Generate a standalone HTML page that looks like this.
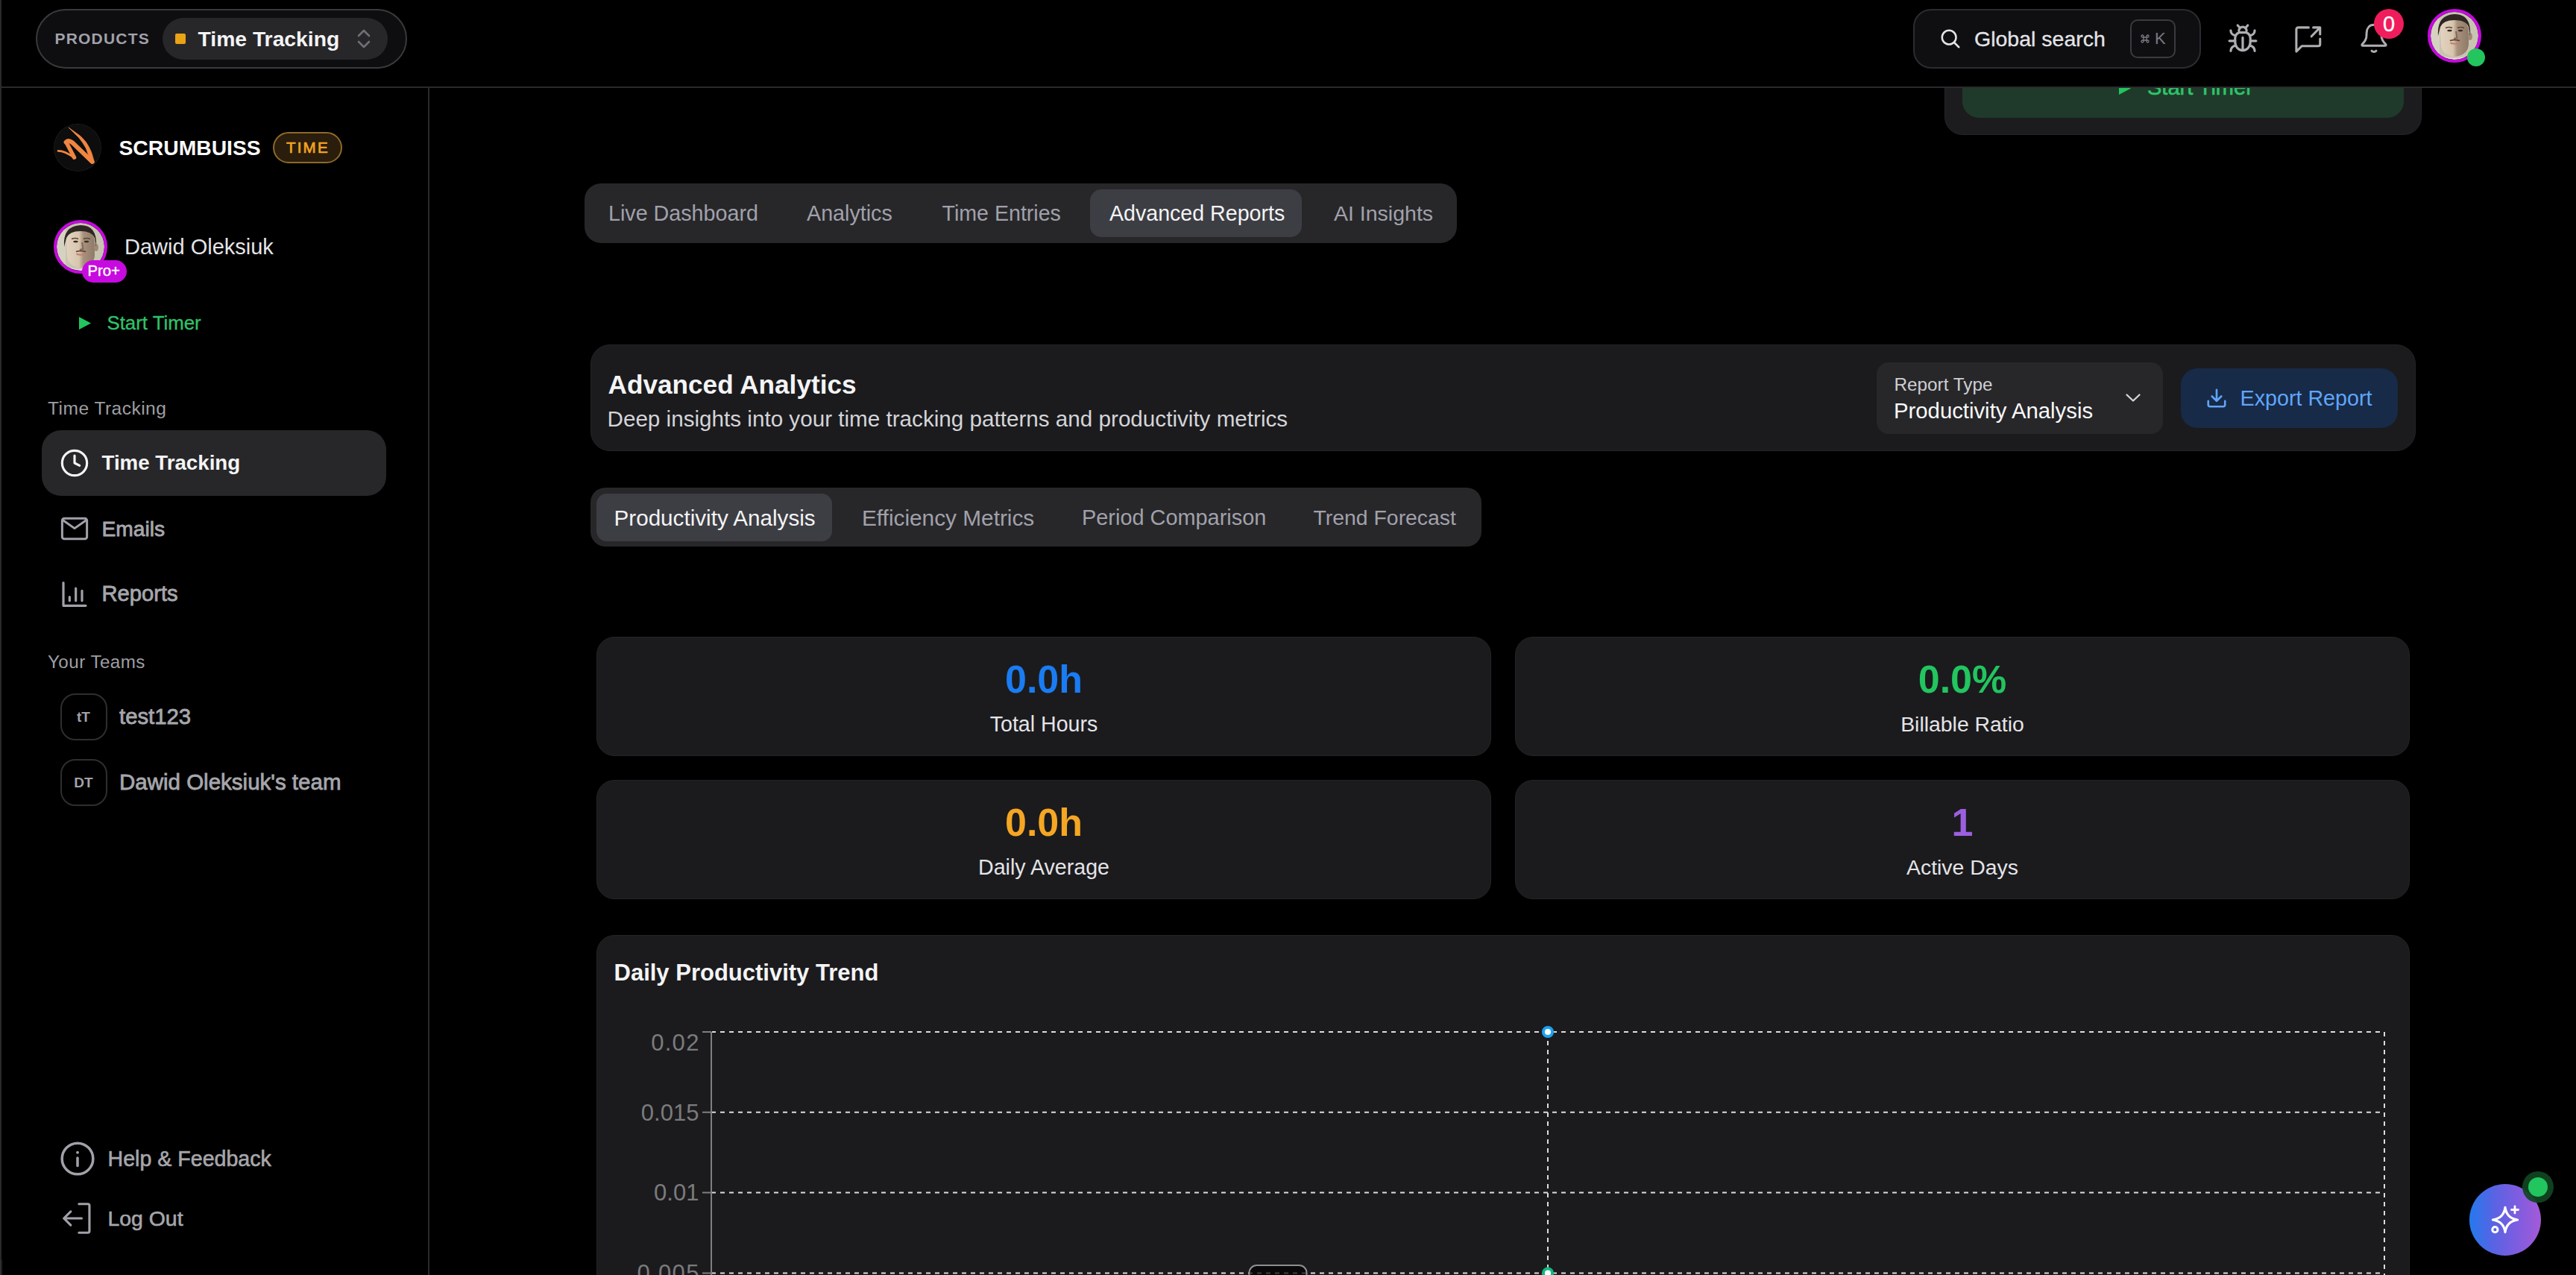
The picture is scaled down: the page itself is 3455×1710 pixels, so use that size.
<!DOCTYPE html>
<html><head><meta charset="utf-8">
<style>
html,body{margin:0;padding:0;background:#000;}
#root{position:relative;width:3455px;height:1710px;overflow:hidden;background:#000;font-family:"Liberation Sans",sans-serif;}
.a{position:absolute;}
.t{position:absolute;line-height:1;white-space:nowrap;}
.b{font-weight:700;}
svg{position:absolute;overflow:visible;}
</style></head><body><div id="root">

<svg style="left:0;top:0;position:absolute" width="0" height="0"><defs><clipPath id="avc"><circle cx="32" cy="32" r="32"/></clipPath>
<filter id="fblur" x="-10%" y="-10%" width="120%" height="120%"><feGaussianBlur stdDeviation="0.6"/></filter>
<linearGradient id="fshade" x1="0" x2="1" y1="0" y2="0"><stop offset="0" stop-color="#e2d3bf"/><stop offset="0.45" stop-color="#d8c5ae"/><stop offset="0.6" stop-color="#a8917c"/><stop offset="1" stop-color="#8f7a68"/></linearGradient>
<g id="face"><g filter="url(#fblur)"><rect x="-2" y="-2" width="68" height="68" fill="#c9c4b1"/><rect x="-2" y="-2" width="14" height="68" fill="#d6d2c2"/>
<path d="M13 26 Q13 10 32 10 Q51 10 51 26 L51 44 Q50 58 32 60 Q15 58 14 44Z" fill="url(#fshade)"/>
<ellipse cx="53" cy="33" rx="3" ry="5" fill="#a08a76"/>
<path d="M10 32 Q8 4 32 3 Q55 3 53 32 L51 20 Q47 11 32 11 Q17 11 13 20Z" fill="#2f2620"/>
<path d="M20 21.5 Q25 19.5 29 21.5M36 21.5 Q40 19.5 45 21.5" stroke="#5a4638" stroke-width="1.6" fill="none"/>
<ellipse cx="25.5" cy="25" rx="3.2" ry="1.3" fill="#3a2c24"/><ellipse cx="40" cy="25" rx="3.2" ry="1.3" fill="#3a2c24"/>
<path d="M34 26 L35.5 35 L31 36" stroke="#7e6656" stroke-width="1.8" fill="none"/>
<path d="M26 38.5 Q32 36.5 39 38.5" stroke="#4f3c31" stroke-width="1.6" fill="none"/>
<path d="M26.5 41.5 Q32 44 38.5 41.5" stroke="#c28274" stroke-width="2.2" fill="none"/>
<path d="M18 60 Q32 64 46 60 L48 66 L16 66Z" fill="#e4dfd4"/></g></g></defs></svg>
<!-- header -->
<div class="a" style="left:0;top:0;width:3455px;height:116px;background:#000;"></div>
<div class="a" style="left:0;top:116px;width:3455px;height:2px;background:#2a2a2b;"></div>
<div class="a" style="left:574px;top:118px;width:2px;height:1592px;background:#2a2a2b;"></div>
<div class="a" style="left:0;top:0;width:1.5px;height:1710px;background:#2a2a2b;"></div><div class="a" style="left:0;top:1690px;width:4px;height:20px;background:linear-gradient(90deg,#3a3d3c,#000);"></div>

<!-- top-right timer card (under header) -->
<div class="a" style="left:2600px;top:118px;width:660px;height:80px;overflow:hidden;">
<div class="a" style="left:8px;top:-178px;width:640px;height:241.4px;background:#1c1c1f;border-radius:24px;box-sizing:border-box;border:1px solid #252528;"></div>
<div class="a" style="left:32px;top:-158px;width:592px;height:197.7px;background:#1f3a2b;border-radius:22px;"></div>
<svg style="left:242px;top:-8px" width="16" height="17" viewBox="0 0 16 17"><path d="M0 0 L16 8.5 L0 17Z" fill="#22c55e"/></svg>
<div class="t" style="left:280px;top:-14.9px;font-size:29px;color:#2fc46a;-webkit-text-stroke:0.6px #2fc46a;">Start Timer</div>
</div>
<div class="a" style="left:48px;top:12px;width:494px;height:76px;border:2px solid #3a3a3d;border-radius:40px;background:#0e0e11;"></div>
<div class="t b" style="left:73.5px;top:41.3px;font-size:21px;letter-spacing:1.2px;color:#a1a1aa;">PRODUCTS</div>
<div class="a" style="left:218px;top:24px;width:302px;height:56px;border-radius:28px;background:#27272a;"></div>
<div class="a" style="left:235px;top:45px;width:14px;height:14px;border-radius:2px;background:#eaa216;"></div>
<div class="t b" style="left:265.5px;top:38.1px;font-size:28.3px;color:#f4f4f5;">Time Tracking</div>
<svg style="left:478px;top:38px" width="20" height="28" viewBox="0 0 20 28"><path d="M3 10 L10 3 L17 10 M3 18 L10 25 L17 18" fill="none" stroke="#6f6f76" stroke-width="2.6" stroke-linecap="round" stroke-linejoin="round"/></svg>

<!-- search -->
<div class="a" style="left:2566px;top:12px;width:382px;height:76px;border:2px solid #2c2c30;border-radius:24px;background:#0f0f12;"></div>
<svg style="left:2601px;top:37px" width="30" height="30" viewBox="0 0 24 24"><circle cx="10.5" cy="10.5" r="7.5" fill="none" stroke="#e4e4e7" stroke-width="2"/><path d="M16 16 L21 21" stroke="#e4e4e7" stroke-width="2" stroke-linecap="round"/></svg>
<div class="t" style="left:2648px;top:37.9px;font-size:28.5px;color:#e4e4e7;-webkit-text-stroke:0.3px #e4e4e7;">Global search</div>
<div class="a" style="left:2857px;top:26px;width:57px;height:48px;border:2px solid #3a3a3f;border-radius:10px;"></div>
<svg style="left:2871px;top:45.5px" width="12" height="12" viewBox="0 0 12 12" fill="none" stroke="#7a7a80" stroke-width="1.3"><path d="M4 4h4v4H4z"/><path d="M4 4V2.5A1.5 1.5 0 1 0 2.5 4H4M8 4V2.5A1.5 1.5 0 1 1 9.5 4H8M4 8v1.5A1.5 1.5 0 1 1 2.5 8H4M8 8v1.5A1.5 1.5 0 1 0 9.5 8H8"/></svg>
<div class="t b" style="left:2890px;top:40.6px;font-size:22px;color:#7a7a80;font-weight:400;">K</div>

<!-- header icons -->
<svg style="left:2986px;top:30px" width="44" height="42" viewBox="0 0 24 23" fill="none" stroke="#aeaeb3" stroke-width="1.75" stroke-linecap="round" stroke-linejoin="round"><path d="M8.3 2.2l1.7 1.9M15.7 2.2l-1.7 1.9"/><path d="M9.2 6.2a2.8 2.8 0 0 1 5.6 0"/><path d="M12 20.6c-3.2 0-5.6-2.8-5.6-6.3v-2.6a4.6 4.6 0 0 1 2.8-4.2h5.6a4.6 4.6 0 0 1 2.8 4.2v2.6c0 3.5-2.4 6.3-5.6 6.3z"/><path d="M12 20.6v-9.4"/><path d="M6.6 9.6C4.7 9.4 3.2 7.9 3.2 6M6.4 13.6H2.2M3.2 21c0-2.1 1.6-3.8 3.6-4M20.8 6c0 1.9-1.5 3.4-3.4 3.6M21.8 13.6h-4.2M17.2 17c2 .2 3.6 1.9 3.6 4"/></svg>
<svg style="left:3075px;top:32px" width="42" height="42" viewBox="0 0 24 24" fill="none" stroke="#aeaeb3" stroke-width="1.75" stroke-linecap="round" stroke-linejoin="round"><path d="M12.2 2.8H4.2a1.4 1.4 0 0 0-1.4 1.4v17l4.2-4.2h12.6a1.4 1.4 0 0 0 1.4-1.4v-4.2"/><path d="M15.8 2.8h5.2v5.2M14.4 9.6l6.4-6.6"/></svg>
<svg style="left:3163px;top:29px" width="42" height="44" viewBox="0 0 24 25" fill="none" stroke="#aeaeb3" stroke-width="1.7" stroke-linecap="round" stroke-linejoin="round"><path d="M12 2.4c-3.4 0-5.4 2.4-5.6 5.8l-.2 3.4c-.2 2.4-1.4 3.9-3.2 5.6-.5.5-.2 1.2.5 1.2h17c.7 0 1-.7.5-1.2-1.8-1.7-3-3.2-3.2-5.6l-.2-3.4C17.4 4.8 15.4 2.4 12 2.4z"/><path d="M10.3 22.3a2.3 2.3 0 0 0 3.4 0"/></svg>
<div class="a" style="left:3184px;top:12px;width:40px;height:40px;border-radius:20px;background:#f01d5c;"></div>
<div class="t" style="left:3184px;top:17.5px;width:40px;text-align:center;font-size:29px;color:#fff;-webkit-text-stroke:0.3px #fff;">0</div>
<svg style="left:3256px;top:12px" width="72" height="72" viewBox="0 0 72 72"><g transform="translate(4 4)" clip-path="url(#avc)"><use href="#face"/></g><circle cx="36" cy="36" r="34" fill="none" stroke="#c70ae0" stroke-width="4"/></svg>
<div class="a" style="left:3309px;top:65px;width:24px;height:24px;border-radius:50%;background:#22c55e;"></div>


<!-- sidebar -->
<div class="a" style="left:72px;top:166px;width:62px;height:62px;border-radius:50%;background:#0d0d0e;border:1px dotted #2c2c2c;"></div>
<svg style="left:66px;top:160px" width="76" height="76" viewBox="0 0 76 76" fill="none" stroke="#ef8540" stroke-linecap="round" stroke-linejoin="round">
<path d="M12 42.4 Q21 42.4 33.6 51.6" stroke-width="2.6"/>
<path d="M33.6 51.2 L23 31" stroke-width="5.4"/>
<path d="M22.6 30.6 Q25.5 27.2 31 31.2 L57.6 56.8" stroke-width="6"/>
<path d="M26.3 11.2 L41.9 22.5 Q50 30 53.2 37 Q57 44 58.6 50.7 L60.4 57.6 Q60 59.6 58 59 L52.4 47.7 Q51 43 49.3 38.7 Q45 31 40.3 25.2 Z" fill="#ef8540" stroke-width="0.8"/>
</svg>
<div class="t b" style="left:159.5px;top:183.5px;font-size:28.3px;color:#fafafa;">SCRUMBUISS</div>
<div class="a" style="left:366px;top:177px;width:89px;height:38px;border:2px solid #8d6a2a;border-radius:21px;background:#2a1d0c;"></div>
<div class="t" style="left:384px;top:187.5px;font-size:20.5px;letter-spacing:2.2px;color:#f2a524;-webkit-text-stroke:0.7px #f2a524;">TIME</div>

<svg style="left:72px;top:295px" width="72" height="72" viewBox="0 0 72 72"><g transform="translate(4 4)" clip-path="url(#avc)"><use href="#face"/></g><circle cx="36" cy="36" r="34" fill="none" stroke="#c70ae0" stroke-width="4"/></svg>
<div class="a" style="left:110px;top:349px;width:60px;height:30px;border-radius:15px;background:#c70ae0;"></div>
<div class="t" style="left:117.5px;top:353.4px;font-size:20.3px;color:#fff;-webkit-text-stroke:0.4px #fff;">Pro+</div>
<div class="t" style="left:167px;top:316.5px;font-size:29px;color:#e4e4e7;">Dawid Oleksiuk</div>
<svg style="left:106px;top:424.5px" width="16" height="17" viewBox="0 0 16 17"><path d="M0 0 L16 8.5 L0 17Z" fill="#22c55e"/></svg>
<div class="t" style="left:143.5px;top:420.5px;font-size:25.8px;color:#2fc46a;-webkit-text-stroke:0.3px #2fc46a;">Start Timer</div>

<div class="t" style="left:64px;top:536.2px;font-size:24.6px;letter-spacing:0.45px;color:#9e9ea3;">Time Tracking</div>
<div class="a" style="left:56px;top:577px;width:462px;height:88px;border-radius:26px;background:#27272a;"></div>
<svg style="left:80px;top:601px" width="40" height="40" viewBox="0 0 24 24" fill="none" stroke="#f4f4f5" stroke-width="1.9" stroke-linecap="round" stroke-linejoin="round"><circle cx="12" cy="12" r="10"/><path d="M12 6v6l4 2"/></svg>
<div class="t b" style="left:136.5px;top:607.2px;font-size:27.7px;color:#f4f4f5;">Time Tracking</div>
<svg style="left:81px;top:692px" width="38" height="34.2" viewBox="0 0 24 21.6" fill="none" stroke="#a1a1aa" stroke-width="1.9" stroke-linecap="round" stroke-linejoin="round"><rect x="1.5" y="2" width="21" height="17.5" rx="1.8"/><path d="M2 3.5l10 7 10-7"/></svg>
<div class="t" style="left:136.5px;top:694.9px;font-size:28.2px;color:#a6a6ac;-webkit-text-stroke:0.8px #a6a6ac;">Emails</div>
<svg style="left:80px;top:779px" width="40" height="36" viewBox="0 0 24 21.6" fill="none" stroke="#a1a1aa" stroke-width="1.9" stroke-linecap="round" stroke-linejoin="round"><path d="M3 1.5v18.5h18"/><path d="M8 16v-3M13 16V6M18 16v-8"/></svg>
<div class="t" style="left:136.5px;top:782.3px;font-size:29.2px;color:#a6a6ac;-webkit-text-stroke:0.8px #a6a6ac;">Reports</div>

<div class="t" style="left:64px;top:876.2px;font-size:24.2px;letter-spacing:0.45px;color:#9e9ea3;">Your Teams</div>
<div class="a" style="left:80.5px;top:929.5px;width:59px;height:59px;border:2px solid #2e2e31;border-radius:20px;"></div>
<div class="t b" style="left:80.5px;top:952px;width:63px;text-align:center;font-size:19px;color:#a1a1aa;">tT</div>
<div class="t" style="left:160px;top:945.6px;font-size:29.3px;color:#a6a6ac;-webkit-text-stroke:0.8px #a6a6ac;">test123</div>
<div class="a" style="left:80.5px;top:1017.5px;width:59px;height:59px;border:2px solid #2e2e31;border-radius:20px;"></div>
<div class="t b" style="left:80.5px;top:1040.3px;width:63px;text-align:center;font-size:19px;color:#a1a1aa;">DT</div>
<div class="t" style="left:160px;top:1033.8px;font-size:29.5px;color:#a6a6ac;-webkit-text-stroke:0.8px #a6a6ac;">Dawid Oleksiuk's team</div>

<svg style="left:79px;top:1529px" width="50" height="50" viewBox="0 0 24 24" fill="none" stroke="#a1a1aa" stroke-width="1.7" stroke-linecap="round" stroke-linejoin="round"><circle cx="12" cy="12" r="10"/><path d="M12 16.5v-5"/><circle cx="12" cy="8" r=".9" fill="#a6a6ac" stroke="none"/></svg>
<div class="t" style="left:144.5px;top:1539.5px;font-size:28.6px;color:#a6a6ac;-webkit-text-stroke:0.6px #a6a6ac;">Help &amp; Feedback</div>
<svg style="left:82px;top:1612px" width="44" height="44" viewBox="0 0 24 24" fill="none" stroke="#a1a1aa" stroke-width="1.7" stroke-linecap="round" stroke-linejoin="round"><path d="M13 1.5h6.5a1.2 1.2 0 0 1 1.2 1.2v18.6a1.2 1.2 0 0 1-1.2 1.2H13"/><path d="M7 7l-5 5 5 5M2 12h13"/></svg>
<div class="t" style="left:144.5px;top:1619.8px;font-size:28.4px;color:#a6a6ac;-webkit-text-stroke:0.6px #a6a6ac;">Log Out</div>

<!-- main tabs -->
<div class="a" style="left:784px;top:246px;width:1170px;height:80px;border-radius:22px;background:#27272a;"></div>
<div class="a" style="left:1462px;top:254px;width:284px;height:64px;border-radius:15px;background:#3d3e44;"></div>
<div class="t" style="left:816px;top:271.8px;font-size:28.7px;color:#a1a1aa;">Live Dashboard</div>
<div class="t" style="left:1082px;top:271.8px;font-size:28.7px;color:#a1a1aa;">Analytics</div>
<div class="t" style="left:1263.5px;top:271.8px;font-size:28.6px;color:#a1a1aa;">Time Entries</div>
<div class="t" style="left:1488px;top:271.8px;font-size:28.6px;color:#f4f4f5;">Advanced Reports</div>
<div class="t" style="left:1789px;top:271.8px;font-size:28.5px;color:#a1a1aa;">AI Insights</div>

<!-- analytics header card -->
<div class="a" style="left:792px;top:462px;width:2448px;height:143px;border-radius:26px;background:#1b1b1e;box-sizing:border-box;border:1px solid #242427;"></div>
<div class="t b" style="left:815.5px;top:497.5px;font-size:35.2px;color:#f4f4f5;">Advanced Analytics</div>
<div class="t" style="left:814.5px;top:547px;font-size:29.65px;color:#d4d4d8;">Deep insights into your time tracking patterns and productivity metrics</div>
<div class="a" style="left:2517px;top:486px;width:384px;height:96px;border-radius:16px;background:#27272a;"></div>
<div class="t" style="left:2540.5px;top:503.6px;font-size:24.3px;color:#cfcfd3;">Report Type</div>
<div class="t" style="left:2540px;top:535.7px;font-size:29.3px;color:#fafafa;">Productivity Analysis</div>
<svg style="left:2850px;top:526px" width="22" height="16" viewBox="0 0 22 16"><path d="M2.5 3.5 L11 11.5 L19.5 3.5" fill="none" stroke="#d4d4d8" stroke-width="2.4" stroke-linecap="round" stroke-linejoin="round"/></svg>
<div class="a" style="left:2925px;top:494px;width:291px;height:80px;border-radius:22px;background:#172a47;"></div>
<svg style="left:2958px;top:519px" width="30" height="30" viewBox="0 0 24 24" fill="none" stroke="#60a5fa" stroke-width="2.1" stroke-linecap="round" stroke-linejoin="round"><path d="M3 15v4a2 2 0 0 0 2 2h14a2 2 0 0 0 2-2v-4"/><path d="M7 10l5 5 5-5M12 15V3"/></svg>
<div class="t" style="left:3004.5px;top:519.6px;font-size:28.7px;color:#60a5fa;">Export Report</div>

<!-- sub tabs -->
<div class="a" style="left:792px;top:654px;width:1195px;height:79px;border-radius:20px;background:#27272a;"></div>
<div class="a" style="left:800px;top:662px;width:316px;height:64px;border-radius:14px;background:#3d3e44;"></div>
<div class="t" style="left:823.5px;top:679.6px;font-size:29.65px;color:#f4f4f5;">Productivity Analysis</div>
<div class="t" style="left:1156px;top:679.9px;font-size:29.8px;color:#a1a1aa;">Efficiency Metrics</div>
<div class="t" style="left:1451px;top:679.9px;font-size:28.9px;color:#a1a1aa;">Period Comparison</div>
<div class="t" style="left:1761.5px;top:679.9px;font-size:28.4px;color:#a1a1aa;">Trend Forecast</div>

<!-- stat cards -->
<div class="a" style="left:800px;top:854px;width:1200px;height:160px;border-radius:24px;background:#1b1b1e;box-sizing:border-box;border:1px solid #242427;"></div>
<div class="a" style="left:2032px;top:854px;width:1200px;height:160px;border-radius:24px;background:#1b1b1e;box-sizing:border-box;border:1px solid #242427;"></div>
<div class="a" style="left:800px;top:1046px;width:1200px;height:160px;border-radius:24px;background:#1b1b1e;box-sizing:border-box;border:1px solid #242427;"></div>
<div class="a" style="left:2032px;top:1046px;width:1200px;height:160px;border-radius:24px;background:#1b1b1e;box-sizing:border-box;border:1px solid #242427;"></div>
<div class="t b" style="left:800px;width:1200px;text-align:center;top:885.1px;font-size:52px;color:#1a7cf2;">0.0h</div>
<div class="t" style="left:800px;width:1200px;text-align:center;top:956.9px;font-size:28.6px;color:#e4e4e7;">Total Hours</div>
<div class="t b" style="left:2032px;width:1200px;text-align:center;top:885.1px;font-size:52px;color:#22c55e;">0.0%</div>
<div class="t" style="left:2032px;width:1200px;text-align:center;top:956.9px;font-size:28.4px;color:#e4e4e7;">Billable Ratio</div>
<div class="t b" style="left:800px;width:1200px;text-align:center;top:1076.5px;font-size:52px;color:#f5a623;">0.0h</div>
<div class="t" style="left:800px;width:1200px;text-align:center;top:1148.9px;font-size:28.6px;color:#e4e4e7;">Daily Average</div>
<div class="t b" style="left:2032px;width:1200px;text-align:center;top:1076.5px;font-size:52px;color:#9d5fe0;">1</div>
<div class="t" style="left:2032px;width:1200px;text-align:center;top:1148.9px;font-size:28.4px;color:#e4e4e7;">Active Days</div>

<!-- chart card -->
<div class="a" style="left:800px;top:1254px;width:2432px;height:600px;border-radius:24px;background:#1b1b1e;box-sizing:border-box;border:1px solid #242427;"></div>
<div class="t b" style="left:823.5px;top:1289px;font-size:31px;color:#f4f4f5;">Daily Productivity Trend</div>
<div class="t" style="left:737.4px;width:200px;text-align:right;top:1383.2px;font-size:31px;color:#7b7b7c;letter-spacing:1.3px;margin-left:1.3px;">0.02</div>
<div class="t" style="left:737.4px;width:200px;text-align:right;top:1476.5px;font-size:31px;color:#7b7b7c;">0.015</div>
<div class="t" style="left:737.4px;width:200px;text-align:right;top:1584.3px;font-size:31px;color:#7b7b7c;">0.01</div>
<div class="t" style="left:737.4px;width:200px;text-align:right;top:1691.8px;font-size:31px;color:#7b7b7c;letter-spacing:1.3px;margin-left:1.3px;">0.005</div>
<svg style="left:0;top:0" width="3455" height="1710" viewBox="0 0 3455 1710">
<g stroke="#7f7f80" stroke-width="2"><path d="M954 1384V1710"/><path d="M942 1384H954M942 1491.7H954M942 1599.6H954M942 1707.6H954"/></g>
<g stroke="#dcdcdc" stroke-width="2" stroke-dasharray="6 6" fill="none"><path stroke-dashoffset="1" d="M955 1384H3196M955 1491.7H3196M955 1599.6H3196M955 1707.6H3196"/><path d="M3198 1384V1710M2076 1384V1710"/></g>
<rect x="1675.5" y="1697" width="77" height="30" rx="10" fill="rgba(3,3,3,0.72)" stroke="#8f8f93" stroke-width="2"/>
<circle cx="2076" cy="1384" r="6.1" fill="#fff" stroke="#1da1f2" stroke-width="4"/>
<circle cx="2076" cy="1707.6" r="6.1" fill="#fff" stroke="#10b981" stroke-width="4"/>
</svg>

<!-- AI fab -->
<div class="a" style="left:3312px;top:1588px;width:96px;height:96px;border-radius:50%;background:linear-gradient(90deg,#2479ee 0%,#5a63e3 35%,#7c5de0 65%,#a45ad8 100%);"></div>
<svg style="left:3360.3px;top:1636px" width="1" height="1" viewBox="0 0 1 1" fill="none" stroke="#fff" stroke-width="3.2" stroke-linecap="round" stroke-linejoin="round"><path d="M0 -16.6 Q2 -2 16.6 0 Q2 2 0 16.6 Q-2 2 -16.6 0 Q-2 -2 0 -16.6Z"/><path d="M13 -18v9M8.5 -13.5h9" stroke-width="2.8"/><circle cx="-13.6" cy="13.2" r="3.6" stroke-width="3"/></svg>
<div class="a" style="left:3383.4px;top:1570.9px;width:41.8px;height:41.8px;border-radius:50%;background:rgba(16,70,34,0.92);"></div>
<div class="a" style="left:3391.1px;top:1578.6px;width:26.4px;height:26.4px;border-radius:50%;background:#22c55e;"></div>
</div></body></html>
